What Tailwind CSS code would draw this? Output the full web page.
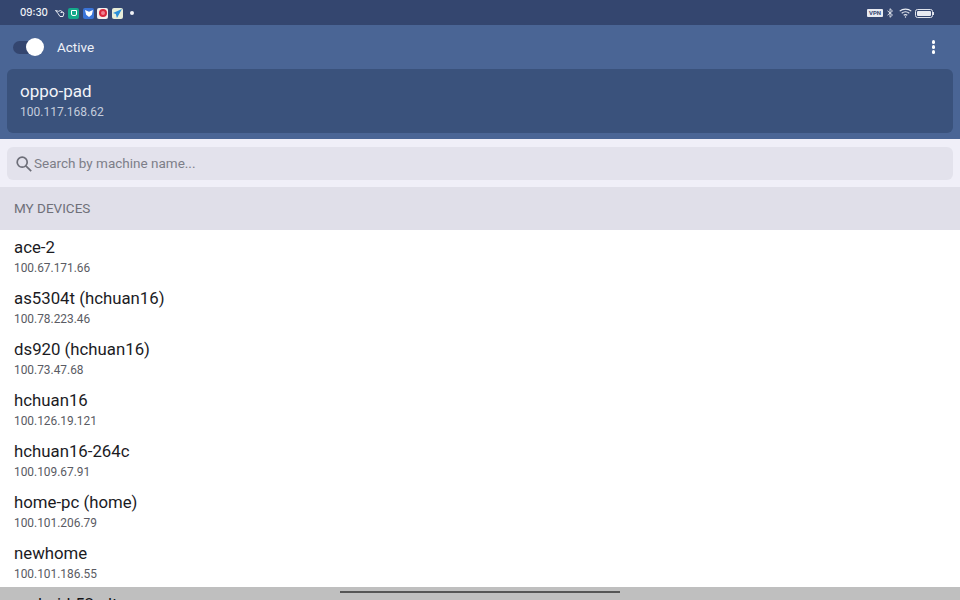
<!DOCTYPE html>
<html lang="en">

<head>
    <meta charset="UTF-8">
    <meta name="viewport" content="width=device-width, initial-scale=1.0">
    <title>Tailscale</title>
    <script src="https://cdn.jsdelivr.net/npm/@tailwindcss/browser@4"></script>
</head>

<body class="relative h-[600px] w-[960px] overflow-hidden bg-white font-['Roboto',sans-serif]">

    <!-- Status bar -->
    <div class="flex h-[25px] items-center justify-between bg-[#34466f] pl-5 pr-[26px] pt-[1px] text-white">
        <div class="flex items-center">
            <span class="mr-[8px] w-[27px] pt-[1px] text-[9.8px] font-['Inter',sans-serif] font-medium text-[#f0f2f6]">09:30</span>
            <svg width="10" height="9" viewBox="0 0 10 9" fill="none" stroke="#e8ebf2" stroke-width="1"><path d="M.5 1.5l3 .8L5.5 1.5 9 4 8 7.5H5L2.8 4.2z"/><path d="M5.5 3.5h2"/></svg>
            <div class="ml-[3px] flex h-[11px] w-[11px] items-center justify-center rounded-[2px] bg-[#14a98a]">
                <div class="h-[6px] w-[6px] rounded-b-[2px] border border-white"></div>
            </div>
            <div class="ml-[4px] flex h-[11px] w-[11px] items-center justify-center rounded-[2px] bg-[#3a74d8]">
                <svg width="8" height="7" viewBox="0 0 7 6" fill="#fff"><path d="M0 0l3.5 1.5L7 0 6 4 3.5 6 1 4z"/></svg>
            </div>
            <div class="ml-[3px] flex h-[11px] w-[11px] items-center justify-center rounded-[2px] bg-[#f4efec]">
                <div class="h-[8px] w-[8px] rounded-full border-2 border-[#d8283c] bg-[#f08090]"></div>
            </div>
            <div class="ml-[4px] flex h-[11px] w-[11px] items-center justify-center rounded-[2px] bg-[#e8edd8]">
                <svg width="9" height="9" viewBox="0 0 8 8" fill="#2a8fd8"><path d="M8 0L0 3.5l2.5 1L3.5 8z"/></svg>
            </div>
            <div class="ml-[7px] h-[4px] w-[4px] rounded-full bg-[#f0f2f6]"></div>
        </div>
        <div class="flex items-center">
            <div class="flex h-[8px] w-[16px] items-center justify-center rounded-[1px] bg-[#e8ebf2] text-[6px] leading-none font-bold text-[#34466f]">VPN</div>
            <svg class="ml-[4px]" width="6" height="10" viewBox="0 0 6 10" fill="none" stroke="#e8ebf2" stroke-width="0.9"><path d="M.5 2.8l5 4.2L3 9.3V.7L5.5 3 .5 7.2"/></svg>
            <svg class="ml-[6px]" width="13" height="10" viewBox="0 0 13 10" fill="none" stroke="#e8ebf2" stroke-width="1.1"><path d="M.7 3.2c3.2-2.8 8.4-2.8 11.6 0"/><path d="M2.7 5.3c2.2-1.8 5.4-1.8 7.6 0"/><path d="M4.7 7.3c1-.8 2.6-.8 3.6 0"/><circle cx="6.5" cy="9" r=".7" fill="#e8ebf2" stroke="none"/></svg>
            <div class="ml-[3px] flex items-center">
                <div class="flex h-[9px] w-[18px] items-center rounded-[2.5px] border border-[#dfe3ec] p-[1px]">
                    <div class="h-full w-full rounded-[1px] bg-[#e8ebf2]"></div>
                </div>
                <div class="h-[3px] w-[1px] bg-[#dfe3ec]"></div>
            </div>
        </div>
    </div>

    <!-- Header -->
    <div class="bg-[#4a6595] px-[7px] pb-[6px]">
        <div class="flex h-[44px] items-center justify-between pl-[6px] pr-[18px]">
            <div class="flex items-center">
                <div class="relative h-[13px] w-[31px] rounded-full bg-[#34466f]">
                    <div class="absolute right-0 top-[-3px] h-[18px] w-[18px] rounded-full bg-white"></div>
                </div>
                <span class="ml-[13px] text-[13.5px] text-[#eef1f7]">Active</span>
            </div>
            <div class="flex flex-col gap-[1.5px]">
                <div class="h-[3.5px] w-[3.5px] rounded-full bg-white"></div>
                <div class="h-[3.5px] w-[3.5px] rounded-full bg-white"></div>
                <div class="h-[3.5px] w-[3.5px] rounded-full bg-white"></div>
            </div>
        </div>
        <div class="flex h-[64px] flex-col justify-center rounded-md bg-[#3a527c] px-[13px] pb-[1.5px]">
            <div class="mb-[1.5px] text-[17px] leading-[22px] text-[#f2f4f8]">oppo-pad</div>
            <div class="text-[12px] leading-[17px] text-[#c5cddc]">100.117.168.62</div>
        </div>
    </div>

    <!-- Search -->
    <div class="bg-[#f0eff8] px-[7px] pb-[7px] pt-[8px]">
        <div class="flex h-[33px] items-center rounded-md bg-[#e3e2ec] pl-[8px]">
            <svg width="18" height="18" viewBox="0 0 18 18" fill="none" stroke="#6d6e78" stroke-width="1.7"><circle cx="7.2" cy="7.2" r="5"/><path d="M10.8 10.8l5.4 5.4"/></svg>
            <span class="ml-[1px] text-[13.5px] text-[#7d7e88]">Search by machine name...</span>
        </div>
    </div>

    <!-- Device list -->
    <div class="flex h-[43px] items-center bg-[#e0dfe9] px-[14px] text-[13.5px] text-[#6f7079]">MY DEVICES</div>

    <div class="px-[14px] pt-[6px]">
        <div class="h-[51px]">
            <div class="mb-[1px] text-[16.8px] leading-[22px] text-[#1b1b1f]">ace-2</div>
            <div class="text-[11.9px] leading-[18px] text-[#5a5b63]">100.67.171.66</div>
        </div>
        <div class="h-[51px]">
            <div class="mb-[1px] text-[16.8px] leading-[22px] text-[#1b1b1f]">as5304t (hchuan16)</div>
            <div class="text-[11.9px] leading-[18px] text-[#5a5b63]">100.78.223.46</div>
        </div>
        <div class="h-[51px]">
            <div class="mb-[1px] text-[16.8px] leading-[22px] text-[#1b1b1f]">ds920 (hchuan16)</div>
            <div class="text-[11.9px] leading-[18px] text-[#5a5b63]">100.73.47.68</div>
        </div>
        <div class="h-[51px]">
            <div class="mb-[1px] text-[16.8px] leading-[22px] text-[#1b1b1f]">hchuan16</div>
            <div class="text-[11.9px] leading-[18px] text-[#5a5b63]">100.126.19.121</div>
        </div>
        <div class="h-[51px]">
            <div class="mb-[1px] text-[16.8px] leading-[22px] text-[#1b1b1f]">hchuan16-264c</div>
            <div class="text-[11.9px] leading-[18px] text-[#5a5b63]">100.109.67.91</div>
        </div>
        <div class="h-[51px]">
            <div class="mb-[1px] text-[16.8px] leading-[22px] text-[#1b1b1f]">home-pc (home)</div>
            <div class="text-[11.9px] leading-[18px] text-[#5a5b63]">100.101.206.79</div>
        </div>
        <div class="h-[51px]">
            <div class="mb-[1px] text-[16.8px] leading-[22px] text-[#1b1b1f]">newhome</div>
            <div class="text-[11.9px] leading-[18px] text-[#5a5b63]">100.101.186.55</div>
        </div>
        <div class="h-[51px]">
            <div class="mb-[1px] text-[16.8px] leading-[22px] text-[#1b1b1f]">android-52-ult</div>
        </div>
    </div>

    <!-- Gesture bar over the list -->
    <div class="absolute inset-x-0 bottom-0 flex h-[13px] justify-center bg-black/25 pt-[4px]">
        <div class="h-[2px] w-[280px] bg-[#555555]"></div>
    </div>

</body>

</html>
